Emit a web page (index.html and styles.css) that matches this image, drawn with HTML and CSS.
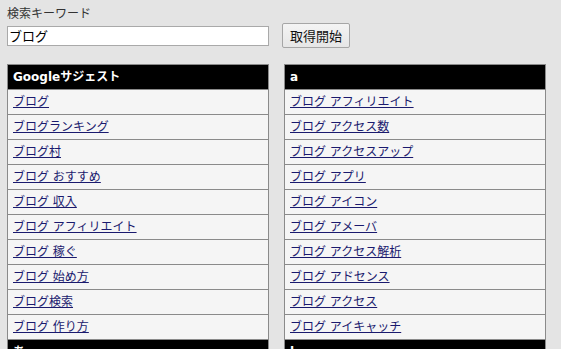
FILE: index.html
```html
<!DOCTYPE html>
<html lang="ja">
<head>
<meta charset="utf-8">
<title>サジェスト</title>
<link rel="stylesheet" href="styles.css">
</head>
<body>
<div class="label">検索キーワード</div>
<form class="search">
  <input class="keyword" type="text" value="ブログ">
  <button class="go" type="button">取得開始</button>
</form>
<div class="sections">
  <div class="box">
    <div class="head">Googleサジェスト</div>
    <div class="item"><a href="#">ブログ</a></div>
    <div class="item"><a href="#">ブログランキング</a></div>
    <div class="item"><a href="#">ブログ村</a></div>
    <div class="item"><a href="#">ブログ おすすめ</a></div>
    <div class="item"><a href="#">ブログ 収入</a></div>
    <div class="item"><a href="#">ブログ アフィリエイト</a></div>
    <div class="item"><a href="#">ブログ 稼ぐ</a></div>
    <div class="item"><a href="#">ブログ 始め方</a></div>
    <div class="item"><a href="#">ブログ検索</a></div>
    <div class="item"><a href="#">ブログ 作り方</a></div>
  </div>
  <div class="box">
    <div class="head">a</div>
    <div class="item"><a href="#">ブログ アフィリエイト</a></div>
    <div class="item"><a href="#">ブログ アクセス数</a></div>
    <div class="item"><a href="#">ブログ アクセスアップ</a></div>
    <div class="item"><a href="#">ブログ アプリ</a></div>
    <div class="item"><a href="#">ブログ アイコン</a></div>
    <div class="item"><a href="#">ブログ アメーバ</a></div>
    <div class="item"><a href="#">ブログ アクセス解析</a></div>
    <div class="item"><a href="#">ブログ アドセンス</a></div>
    <div class="item"><a href="#">ブログ アクセス</a></div>
    <div class="item"><a href="#">ブログ アイキャッチ</a></div>
  </div>
  <div class="box">
    <div class="head">あ</div>
    <div class="item"><a href="#">ブログ あいさつ</a></div>
    <div class="item"><a href="#">ブログ 集客</a></div>
  </div>
  <div class="box">
    <div class="head">b</div>
    <div class="item"><a href="#">ブログ be</a></div>
    <div class="item"><a href="#">ブログ bgm</a></div>
  </div>
</div>
</body>
</html>
```
FILE: styles.css
```css
html, body {
  margin: 0;
  background: #e4e4e4;
}
body {
  padding: 5px 7px 20px;
  font-family: "DejaVu Sans", "Noto Sans CJK JP", sans-serif;
  font-size: 12px;
  color: #222;
}
.label {
  line-height: 18px;
  color: #333;
}
.search {
  display: flex;
  align-items: center;
  gap: 13px;
  margin: 0;
  height: 25px;
}
.keyword {
  box-sizing: border-box;
  width: 262px;
  height: 20px;
  margin: 0;
  padding: 0 1px;
  border: 1px solid #a9a9a9;
  background: #fff;
  font-family: "Noto Sans CJK JP", sans-serif;
  font-size: 13px;
  color: #000;
  outline: none;
}
.go {
  box-sizing: border-box;
  width: 68px;
  height: 25px;
  margin: 0;
  padding: 0;
  border: 1px solid #a6a6a6;
  border-radius: 2px;
  background: linear-gradient(#f4f4f4, #e6e6e6);
  font-family: "Noto Sans CJK JP", sans-serif;
  font-size: 13px;
  color: #111;
}
.sections {
  display: grid;
  grid-template-columns: 262px 262px;
  column-gap: 15px;
  margin-top: 16px;
}
.box {
  border: 1px solid #8a8a8a;
  border-top: none;
  background: #f5f5f5;
}
.box:nth-child(-n+2) {
  border-top: 1px solid #8a8a8a;
}
.head {
  height: 24px;
  line-height: 24px;
  padding-left: 5px;
  background: #000;
  color: #fff;
  font-weight: bold;
  border-bottom: 1px solid #8a8a8a;
}
.item {
  height: 24px;
  line-height: 24px;
  padding-left: 5px;
  border-bottom: 1px solid #8a8a8a;
}
.item:last-child {
  border-bottom: none;
}
.item a {
  color: #1a1a6e;
  text-decoration: underline;
}
```
